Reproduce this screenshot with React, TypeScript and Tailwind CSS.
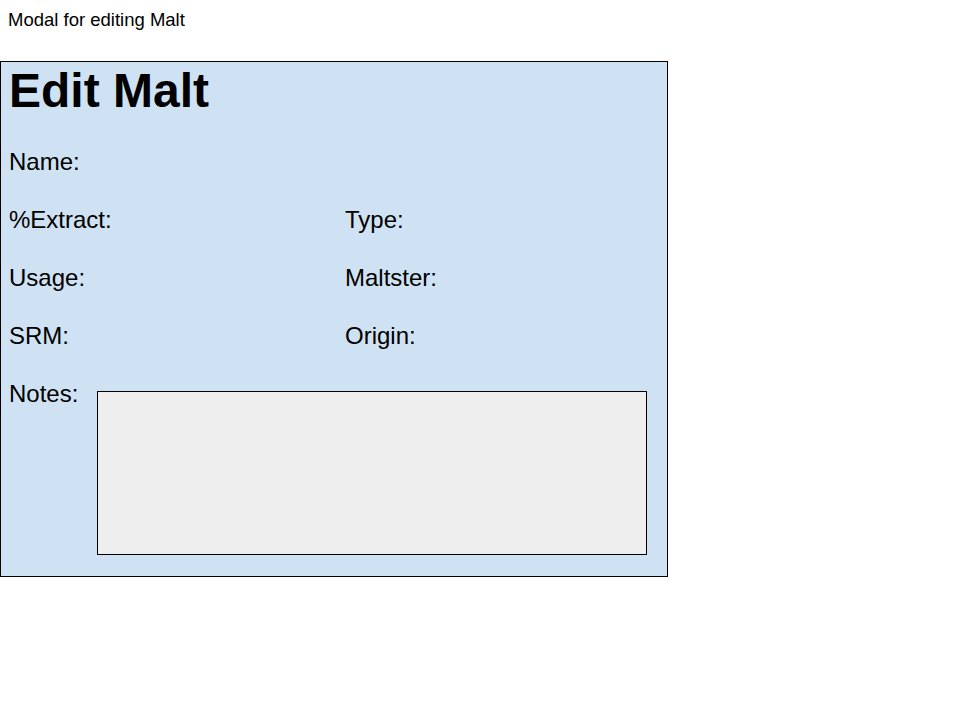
const ROWS: [string, string?][] = [
  ['Name:'],
  ['%Extract:', 'Type:'],
  ['Usage:', 'Maltster:'],
  ['SRM:', 'Origin:'],
]

export default function App() {
  return (
    <div className="h-[720px] w-[960px] bg-white text-black" style={{ fontFamily: '"Liberation Sans", Arial, sans-serif' }}>
      {/* page caption */}
      <p className="pl-[8px] pt-[9px] text-[18.5px] leading-[22px]">Modal for editing Malt</p>

      {/* modal mock */}
      <div className="mt-[30px] box-border h-[516px] w-[668px] border border-black bg-[#cfe2f3] pl-[8px] pt-[5px]">
        <h1 className="h-[48px] text-[48px] font-bold leading-[48px]">Edit Malt</h1>

        <div className="mt-[18px]">
          {ROWS.map(([left, right]) => (
            <div key={left} className="grid h-[58px] grid-cols-[336px_1fr] text-[24px] leading-[58px]">
              <span>{left}</span>
              {right && <span>{right}</span>}
            </div>
          ))}

          <div className="flex h-[58px] text-[24px] leading-[58px]">
            <span className="w-[88px] shrink-0">Notes:</span>
            <div className="mt-[26px] box-border h-[164px] w-[550px] shrink-0 border border-black bg-[#eeeeee]" />
          </div>
        </div>
      </div>
    </div>
  )
}
